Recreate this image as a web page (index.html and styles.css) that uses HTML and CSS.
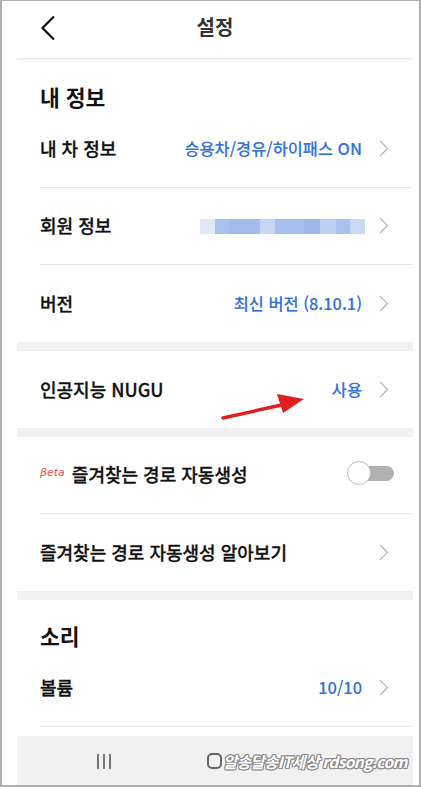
FILE: index.html
```html
<!DOCTYPE html>
<html lang="ko">
<head>
<meta charset="utf-8">
<title>설정</title>
<link rel="stylesheet" href="styles.css">
</head>
<body>
<div class="frame">
  <div class="screen">
    <header class="header">
      <svg class="back" width="16" height="26" viewBox="0 0 16 26"><path d="M14 1.5 L2.5 13 L14 24.5" fill="none" stroke="#111" stroke-width="2.2"/></svg>
      <h1 class="title">설정</h1>
    </header>
    <div class="shadow"></div>

    <div class="section">내 정보</div>
    <div class="row line">
      <span class="label">내 차 정보</span>
      <span class="value">승용차/경유/하이패스 ON</span>
      <svg class="chev" width="10" height="17" viewBox="0 0 10 17"><path d="M1 1 L8.5 8.5 L1 16" fill="none" stroke="#b5b5b5" stroke-width="1.3"/></svg>
    </div>
    <div class="row line">
      <span class="label">회원 정보</span>
      <span class="blur"><i class="b b1"></i><i class="b b2"></i><i class="b b3"></i><i class="b b4"></i><i class="b b5"></i><i class="b b6"></i><i class="b b7"></i><i class="b b8"></i><i class="b b9"></i></span>
      <svg class="chev" width="10" height="17" viewBox="0 0 10 17"><path d="M1 1 L8.5 8.5 L1 16" fill="none" stroke="#b5b5b5" stroke-width="1.3"/></svg>
    </div>
    <div class="row">
      <span class="label">버전</span>
      <span class="value">최신 버전 (8.10.1)</span>
      <svg class="chev" width="10" height="17" viewBox="0 0 10 17"><path d="M1 1 L8.5 8.5 L1 16" fill="none" stroke="#b5b5b5" stroke-width="1.3"/></svg>
    </div>
    <div class="sep"></div>
    <div class="row nugu">
      <span class="label">인공지능 NUGU</span>
      <span class="value">사용</span>
      <svg class="chev" width="10" height="17" viewBox="0 0 10 17"><path d="M1 1 L8.5 8.5 L1 16" fill="none" stroke="#b5b5b5" stroke-width="1.3"/></svg>
      <svg class="arrow" width="90" height="30" viewBox="0 0 90 30"><path d="M3 25 L66 11" stroke="#e01f1f" stroke-width="3.4" stroke-linecap="round"/><path d="M57 1 L84 6 L63 20 Z" fill="#e01f1f"/></svg>
    </div>
    <div class="sep"></div>
    <div class="row line">
      <span class="label"><em class="beta">βeta</em>즐겨찾는 경로 자동생성</span>
      <span class="toggle"><span class="knob"></span></span>
    </div>
    <div class="row">
      <span class="label">즐겨찾는 경로 자동생성 알아보기</span>
      <svg class="chev" width="10" height="17" viewBox="0 0 10 17"><path d="M1 1 L8.5 8.5 L1 16" fill="none" stroke="#b5b5b5" stroke-width="1.3"/></svg>
    </div>
    <div class="sep"></div>
    <div class="section">소리</div>
    <div class="row line">
      <span class="label">볼륨</span>
      <span class="value">10/10</span>
      <svg class="chev" width="10" height="17" viewBox="0 0 10 17"><path d="M1 1 L8.5 8.5 L1 16" fill="none" stroke="#b5b5b5" stroke-width="1.3"/></svg>
    </div>
    <div class="gap"></div>
    <nav class="nav">
      <span class="recent"><i></i><i></i><i></i></span>
      <span class="home"></span>
      <span class="mark">알송달송IT세상 rdsong.com</span>
    </nav>
  </div>
</div>
</body>
</html>
```

FILE: styles.css
```css
* { box-sizing: border-box; }
html, body { margin: 0; padding: 0; background: #fff; }
body { font-family: "Noto Sans CJK KR", "Noto Sans", sans-serif; }

.frame {
  width: 421px;
  height: 787px;
  border: 2px solid #b0b0b0;
  border-top: 1px solid #b0b0b0;
  padding: 0 6px 0 15px;
  overflow: hidden;
  background: #fff;
}

.screen { width: 396px; }

.header {
  height: 57px;
  display: flex;
  justify-content: center;
  position: relative;
}
.back { position: absolute; left: 23px; top: 14px; }
.title {
  margin: 0;
  font-size: 20px;
  font-weight: 700;
  color: #333;
  line-height: 26px;
  padding-top: 13px;
}
.shadow {
  height: 3px;
  background: linear-gradient(#e4e4e4, #f7f7f7 60%, #fff);
}

.section {
  height: 50px;
  padding: 23px 0 0 23px;
  font-size: 21.5px;
  font-weight: 700;
  line-height: 26px;
  color: #111;
}

.row {
  height: 77px;
  margin-left: 23px;
  padding-right: 24px;
  display: flex;
  align-items: center;
  position: relative;
}
.row.line { border-bottom: 1px solid #e9e9e9; }

.label {
  flex: 1;
  font-size: 18px;
  font-weight: 500;
  color: #111;
  -webkit-text-stroke: 0.3px #111;
  display: flex;
  align-items: center;
  margin-top: -2px;
}
.value {
  font-size: 16.4px;
  font-weight: 500;
  color: #3373d8;
  -webkit-text-stroke: 0.1px #3373d8;
  margin-right: 17px;
  margin-top: -2px;
}
.chev { display: block; margin-top: -1px; }

.sep { height: 9px; background: #f1f1f1; }

.beta {
  font-family: "DejaVu Sans", sans-serif;
  font-style: italic;
  font-size: 11px;
  color: #e25050;
  -webkit-text-stroke: 0;
  margin-right: 7px;
  margin-top: -3px;
}

.blur { display: flex; height: 15px; margin-right: 14px; }
.b { display: block; height: 15px; }
.b1 { width: 15px; background: #e1e9f8; }
.b2 { width: 14px; background: #a9c1ee; }
.b3 { width: 31px; background: #a1bbec; }
.b4 { width: 15px; background: #c6d6f4; }
.b5 { width: 29px; background: #a8c0ee; }
.b6 { width: 16px; background: #9fb8eb; }
.b7 { width: 16px; background: #bdd0f3; }
.b8 { width: 14px; background: #a9c1ef; }
.b9 { width: 15px; background: #c8d9f5; }

.toggle {
  width: 46px;
  height: 15px;
  border-radius: 8px;
  background: #b1b1b1;
  position: relative;
  margin-right: -5px;
  margin-top: -4px;
}
.knob {
  position: absolute;
  left: -1px;
  top: -5px;
  width: 24px;
  height: 24px;
  border-radius: 50%;
  background: #fff;
  border: 1px solid #b9b9b9;
}

.arrow { position: absolute; left: 180px; top: 42px; }

.gap { height: 9px; }

.nav {
  height: 50px;
  background: #f1f1f1;
  position: relative;
  display: flex;
  align-items: center;
}
.recent { display: flex; gap: 4px; margin-left: 80px; flex-shrink: 0; }
.recent i { display: block; width: 2px; height: 15px; background: #777; }
.home {
  width: 15px;
  height: 16px;
  border: 2px solid #666;
  border-radius: 5px;
  margin-left: 96px;
  flex-shrink: 0;
}
.mark {
  font-family: "Noto Sans CJK KR", sans-serif;
  font-style: italic;
  font-weight: 700;
  font-size: 15.5px;
  white-space: nowrap;
  color: #fff;
  letter-spacing: -0.6px;
  margin-left: 1px;
  flex-shrink: 0;
  text-shadow: -1px -1px 0 #888, 1px -1px 0 #888, -1px 1px 0 #888, 1px 1px 0 #888, 0 1px 0 #888, 1px 0 0 #888, 0 -1px 0 #888, -1px 0 0 #888;
}
```
